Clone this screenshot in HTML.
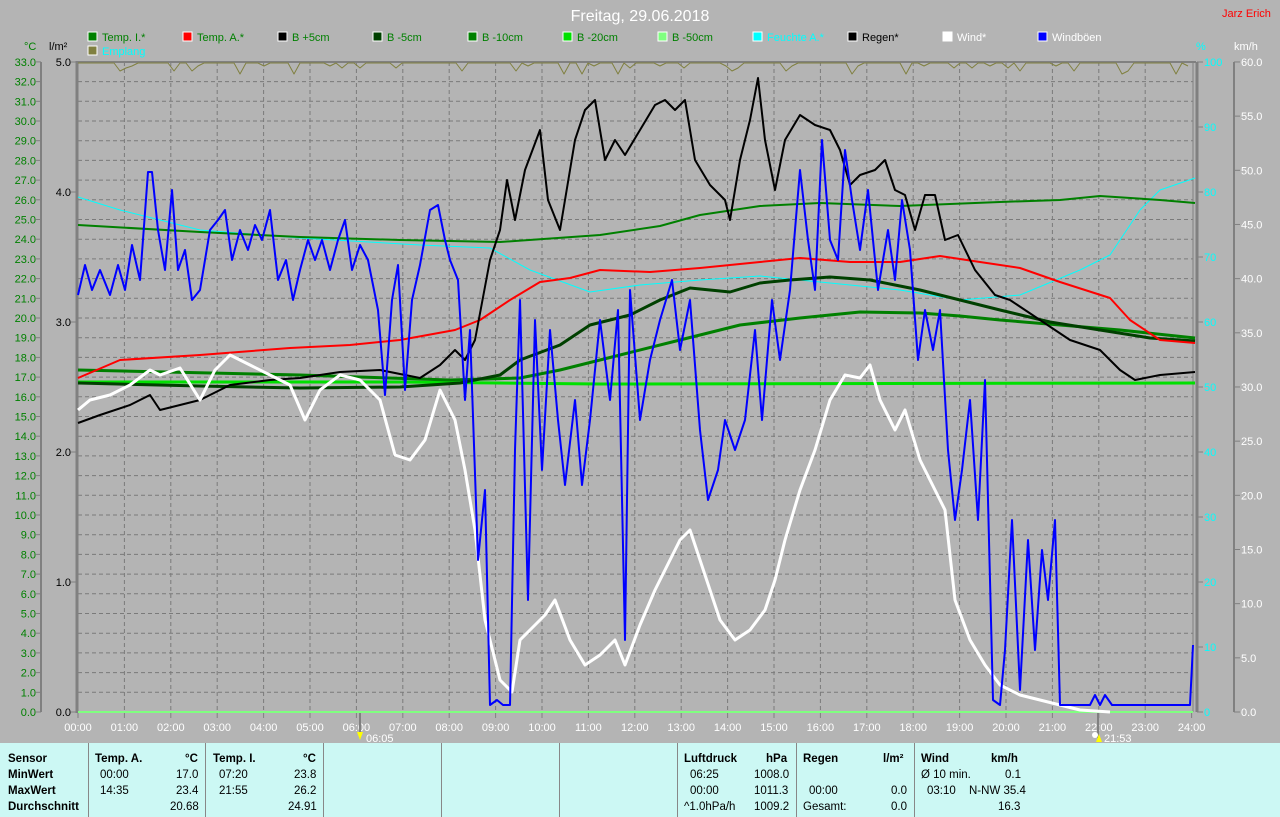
<!DOCTYPE html>
<html><head><meta charset="utf-8"><style>
html,body{margin:0;padding:0;background:#b4b4b4;}
body{width:1280px;height:817px;overflow:hidden;position:relative;font-family:"Liberation Sans",Arial,sans-serif;}
svg{position:absolute;left:0;top:0;}
#tbl{position:absolute;left:0;top:743px;width:1280px;height:74px;background:#ccf8f4;font-size:11.5px;color:#000;}
.c{position:absolute;top:0;height:74px;border-left:1px solid #888;}
.t{position:absolute;white-space:nowrap;}
.b{font-weight:bold;}
</style></head><body>
<svg id="s" width="1280" height="743" xmlns="http://www.w3.org/2000/svg" font-family="Liberation Sans, Arial, sans-serif"></svg>
<div id="tbl">
<div class="c" style="left:88px"></div><div class="c" style="left:205px"></div><div class="c" style="left:323px"></div><div class="c" style="left:441px"></div><div class="c" style="left:559px"></div><div class="c" style="left:677px"></div><div class="c" style="left:796px"></div><div class="c" style="left:914px"></div>
<div class="t b" style="left:8px;top:10px">Sensor</div>
<div class="t b" style="left:8px;top:26px">MinWert</div>
<div class="t b" style="left:8px;top:42px">MaxWert</div>
<div class="t b" style="left:8px;top:58px">Durchschnitt</div>
<div class="t b" style="left:95px;top:10px">Temp. A.</div><div class="t b" style="left:185px;top:10px">°C</div>
<div class="t" style="left:100px;top:26px">00:00</div><div class="t" style="left:176px;top:26px">17.0</div>
<div class="t" style="left:100px;top:42px">14:35</div><div class="t" style="left:176px;top:42px">23.4</div>
<div class="t" style="left:170px;top:58px">20.68</div>
<div class="t b" style="left:213px;top:10px">Temp. I.</div><div class="t b" style="left:303px;top:10px">°C</div>
<div class="t" style="left:219px;top:26px">07:20</div><div class="t" style="left:294px;top:26px">23.8</div>
<div class="t" style="left:219px;top:42px">21:55</div><div class="t" style="left:294px;top:42px">26.2</div>
<div class="t" style="left:288px;top:58px">24.91</div>
<div class="t b" style="left:684px;top:10px">Luftdruck</div><div class="t b" style="left:766px;top:10px">hPa</div>
<div class="t" style="left:690px;top:26px">06:25</div><div class="t" style="left:754px;top:26px">1008.0</div>
<div class="t" style="left:690px;top:42px">00:00</div><div class="t" style="left:754px;top:42px">1011.3</div>
<div class="t" style="left:684px;top:58px">^1.0hPa/h</div><div class="t" style="left:754px;top:58px">1009.2</div>
<div class="t b" style="left:803px;top:10px">Regen</div><div class="t b" style="left:883px;top:10px">l/m²</div>
<div class="t" style="left:809px;top:42px">00:00</div><div class="t" style="left:891px;top:42px">0.0</div>
<div class="t" style="left:803px;top:58px">Gesamt:</div><div class="t" style="left:891px;top:58px">0.0</div>
<div class="t b" style="left:921px;top:10px">Wind</div><div class="t b" style="left:991px;top:10px">km/h</div>
<div class="t" style="left:921px;top:26px">Ø 10 min.</div><div class="t" style="left:1005px;top:26px">0.1</div>
<div class="t" style="left:927px;top:42px">03:10</div><div class="t" style="left:969px;top:42px">N-NW 35.4</div>
<div class="t" style="left:998px;top:58px">16.3</div>
</div>
<script>
var s=document.getElementById('s'),h='';
function L(x1,y1,x2,y2,c,w,d){h+='<line x1="'+x1+'" y1="'+y1+'" x2="'+x2+'" y2="'+y2+'" stroke="'+c+'" stroke-width="'+(w||1)+'"'+(d?' stroke-dasharray="'+d+'"':'')+'/>';}
function T(x,y,t,c,sz,a){h+='<text x="'+x+'" y="'+y+'" fill="'+c+'" font-size="'+(sz||11)+'"'+(a?' text-anchor="'+a+'"':'')+'>'+t+'</text>';}
function P(pts,c,w){h+='<polyline fill="none" stroke="'+c+'" stroke-width="'+w+'" stroke-linejoin="round" points="'+pts+'"/>';}
// grid
for(var i=1;i<33;i++){var y=712-i*19.7;L(78,y,1193,y,'#7a7a7a',1,'4,3');}
for(var k=1;k<24;k++){var x=78+k*46.4;L(x,62,x,712,'#7a7a7a',1,'4,3');}
L(77,61,77,713,'#808080',3);L(77,62,1196,62,'#808080',2);L(1193,62,1193,712,'#808080',1);L(1197,62,1197,712,'#808080',3);
L(41,62,41,712,'#808080',2);L(1234,62,1234,712,'#808080',2);
for(var i=0;i<=33;i++){var y=712-i*19.7;L(36,y,41,y,'#808080');T(36,y+4,i.toFixed(1),'#008000',11,'end');}
for(var i=0;i<=5;i++){var y=712-i*130;L(71,y,77,y,'#808080');T(71,y+4,i.toFixed(1),'#000',11,'end');}
for(var i=0;i<=10;i++){var y=712-i*65;L(1197,y,1203,y,'#808080');T(1204,y+4,i*10,'#00ffff',11);}
for(var i=0;i<=12;i++){var y=712-i*54.17;L(1234,y,1240,y,'#808080');T(1241,y+4,(i*5).toFixed(1),'#fff',11);}
for(var k=0;k<=24;k++){var x=78+k*46.4;L(x,712,x,718,'#808080');T(x,731,(k<10?'0':'')+k+':00','#fff',11,'middle');}
T(24,50,'°C','#008000',11);T(49,50,'l/m²','#000',11);T(1196,50,'%','#00ffff',11);T(1234,50,'km/h','#fff',11);
T(640,21,'Freitag, 29.06.2018','#fff',16,'middle');T(1222,17,'Jarz Erich','#ff0000',11);
var lg=[['Temp. I.*','#008000','#008000'],['Temp. A.*','#ff0000','#008000'],['B +5cm','#000','#008000'],['B -5cm','#004000','#008000'],['B -10cm','#008000','#008000'],['B -20cm','#00e000','#008000'],['B -50cm','#80ff80','#008000'],['Feuchte A.*','#00ffff','#00ffff'],['Regen*','#000','#000'],['Wind*','#fff','#fff'],['Windböen','#0000ff','#fff']];
lg.forEach(function(e,i){var x=88+i*95;h+='<rect x="'+x+'" y="32" width="9" height="9" fill="'+e[1]+'" stroke="#fff" stroke-width="1"/>';T(x+14,41,e[0],e[2],11);});
h+='<rect x="88" y="46" width="9" height="9" fill="#808040" stroke="#fff"/>';T(102,55,'Emplang','#00ffff',11);
// sunrise/sunset markers
L(360,712,360,738,'#808080',2);L(1098,712,1098,738,'#808080',2);
h+='<polygon points="357,732 363,732 360,740" fill="#ffff00"/>';T(366,742,'06:05','#fff',11);
h+='<circle cx="1095" cy="735" r="3" fill="#fff"/><polygon points="1096,742 1102,742 1099,734" fill="#ffff00"/>';T(1104,742,'21:53','#fff',11);
// Emplang olive
var e='';for(var x=78;x<=1193;x+=6){var d=(Math.sin(x*0.37)+Math.sin(x*0.113)>1.1)?(5+((x*7)%9)):((x%11==0)?3:0);e+=x+','+(63+d)+' ';}
P(e,'#808040',1);
P('78,712 1193,712','#80ff80',2);
P('78,197 120,210 200,230 300,238 420,245 490,248 530,270 590,292 640,285 700,280 760,276 820,282 900,290 960,300 1020,295 1080,270 1110,255 1140,210 1160,190 1195,178','#00ffff',1);
P('78,382 400,382 600,384 1195,383','#00e000',3);
P('78,370 300,375 450,380 520,378 560,370 620,355 680,340 740,325 800,318 860,312 920,313 960,316 1000,320 1060,325 1120,330 1195,338','#008000',3);
P('78,383 200,386 300,388 400,387 460,383 500,375 520,360 560,345 590,325 630,315 660,300 690,288 730,292 760,283 790,280 830,277 870,280 920,290 960,300 1000,310 1050,322 1100,330 1150,338 1195,341','#004000',3);
P('78,225 200,232 300,237 400,240 500,242 600,235 660,226 700,215 760,206 820,203 900,206 1000,202 1060,200 1100,196 1160,200 1195,203','#008000',2);
P('78,378 120,360 200,355 290,348 350,345 400,340 455,330 480,320 510,300 540,282 570,278 600,270 650,272 700,268 760,262 800,258 850,262 900,262 940,256 980,262 1020,268 1060,282 1110,298 1130,320 1160,340 1195,343','#ff0000',2);
P('78,423 100,415 130,405 150,395 160,410 200,400 230,385 270,380 300,378 340,372 380,370 420,378 440,365 455,350 465,360 475,340 490,260 500,230 507,180 515,220 525,170 540,130 548,200 560,230 575,140 585,110 595,100 605,160 615,140 625,155 640,130 655,105 665,100 675,110 685,100 695,160 710,185 725,200 730,220 740,160 750,120 758,78 765,140 775,190 785,140 800,115 815,125 830,130 840,150 850,185 860,175 875,170 885,160 895,190 905,195 915,230 925,195 935,195 945,240 958,235 975,270 995,295 1010,300 1040,320 1070,340 1100,350 1120,370 1135,380 1160,375 1195,372','#000',2);
P('78,410 90,400 110,395 130,385 150,370 160,375 180,368 200,400 215,370 230,355 250,365 270,375 290,385 305,420 320,390 340,375 360,380 380,400 395,455 410,460 425,440 440,390 455,420 465,470 475,530 485,620 500,680 512,692 520,640 530,630 545,615 555,600 570,640 585,665 600,655 615,640 625,665 640,625 655,590 665,570 680,540 690,530 700,560 710,590 720,620 735,640 750,630 765,610 775,580 785,540 800,490 815,450 830,400 845,375 860,378 870,365 880,400 895,430 905,410 920,460 935,490 945,510 955,600 970,640 985,665 1000,685 1020,695 1040,700 1060,705 1080,710 1110,712','#fff',3);
P('78,295 85,265 92,290 100,270 110,295 118,265 125,290 132,245 140,280 148,172 152,172 158,230 165,270 172,190 178,270 185,250 192,300 200,290 210,230 218,220 225,210 232,260 240,230 248,250 255,225 262,240 270,210 278,280 286,260 293,300 300,270 308,240 315,260 322,240 330,270 338,240 345,220 352,270 360,245 368,260 378,310 385,395 392,300 398,265 405,390 412,300 420,265 430,210 438,205 445,240 450,260 458,280 465,400 470,330 478,560 485,490 490,705 497,700 503,705 510,705 515,450 520,300 528,600 535,320 542,470 550,330 558,420 565,485 575,400 582,485 590,420 600,320 610,400 618,310 625,640 630,290 640,420 650,360 660,320 672,280 680,350 690,300 700,430 708,500 718,470 725,420 735,450 745,420 755,330 762,420 772,300 780,360 790,290 800,170 808,240 815,290 822,140 830,240 838,260 845,150 852,200 860,250 868,190 878,290 888,230 895,280 902,200 910,250 918,360 925,310 933,350 940,310 948,450 955,520 962,470 970,400 978,520 985,380 993,700 1000,705 1005,650 1012,520 1020,690 1028,540 1035,650 1042,550 1048,600 1055,520 1060,705 1090,705 1095,695 1100,705 1105,695 1112,705 1190,705 1193,645','#0000ff',2);
s.innerHTML=h;
</script>
</body></html>
